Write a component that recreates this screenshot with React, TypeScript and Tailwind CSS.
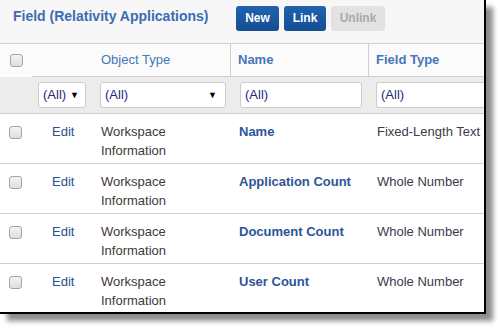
const rows = [
  { name: "Name", type: "Fixed-Length Text" },
  { name: "Application Count", type: "Whole Number" },
  { name: "Document Count", type: "Whole Number" },
  { name: "User Count", type: "Whole Number" },
];

const cols = "grid grid-cols-[32px_63px_136px_138px_1fr]";

function Checkbox() {
  return (
    <span className="block h-[13px] w-[13px] rounded-[3px] border border-[#a5a5a5] bg-gradient-to-b from-[#f4f4f4] to-[#dedede]" />
  );
}

function Caret() {
  return <span className="text-[9px] leading-none text-black">▼</span>;
}

export default function App() {
  return (
    <div className="h-[328px] w-[500px] overflow-hidden bg-white font-['Liberation_Sans',Arial,sans-serif] text-[13px]">
      <div className="h-[314px] w-[486px] overflow-hidden border-b-2 border-r-2 border-black bg-white shadow-[7px_7px_5px_rgba(0,0,0,0.45)]">
        {/* title bar */}
        <div className="flex h-[44px] items-center border-b border-[#cfcfcf] bg-[#f7f7f7] pl-[13px]">
          <h1 className="mb-[10px] w-[223px] text-[14px] font-bold text-[#3b6db4]">
            Field (Relativity Applications)
          </h1>
          <div className="mb-[7px] flex gap-[5px] text-[12px] font-bold">
            <button className="h-[25px] w-[43px] rounded-[3px] bg-gradient-to-b from-[#1f63ad] to-[#154e93] text-white">
              New
            </button>
            <button className="h-[25px] w-[42px] rounded-[3px] bg-gradient-to-b from-[#1f63ad] to-[#154e93] text-white">
              Link
            </button>
            <button className="h-[25px] w-[54px] rounded-[3px] bg-[#e2e2e2] text-[#a9a9a9]">
              Unlink
            </button>
          </div>
        </div>

        {/* header row */}
        <div className={`${cols} h-[33px] bg-[#fbfbfb]`}>
          <div className="flex items-center pl-[10px]">
            <Checkbox />
          </div>
          <div className="border-b border-[#cfcfcf]" />
          <div className="flex items-center border-b border-r border-[#cfcfcf] pl-[6px] text-[#4677b8]">
            Object Type
          </div>
          <div className="flex items-center border-b border-r border-[#cfcfcf] pl-[7px] font-bold text-[#4677b8]">
            Name
          </div>
          <div className="flex items-center border-b border-[#cfcfcf] pl-[7px] font-bold text-[#4677b8]">
            Field Type
          </div>
        </div>

        {/* filter row */}
        <div className={`${cols} h-[37px] items-center border-b border-[#cfcfcf] bg-[#ececec] text-[#1d2a7a]`}>
          <div />
          <div className="pl-[6px]">
            <div className="flex h-[26px] w-[48px] items-center justify-between rounded-[3px] border border-[#cccccc] bg-white pl-[4px] pr-[6px]">
              <span>(All)</span>
              <Caret />
            </div>
          </div>
          <div className="pl-[5px] pr-[5px]">
            <div className="flex h-[26px] items-center justify-between rounded-[3px] border border-[#cccccc] bg-white pl-[4px] pr-[8px]">
              <span>(All)</span>
              <Caret />
            </div>
          </div>
          <div className="pl-[9px] pr-[7px]">
            <div className="flex h-[26px] items-center rounded-[3px] border border-[#cccccc] bg-white pl-[4px]">
              (All)
            </div>
          </div>
          <div className="pl-[7px]">
            <div className="flex h-[26px] w-[120px] items-center rounded-l-[3px] border-y border-l border-[#cccccc] bg-white pl-[4px]">
              (All)
            </div>
          </div>
        </div>

        {/* data rows */}
        {rows.map((row, i) => (
          <div
            key={row.name}
            className={`${cols} h-[50px] leading-[19px] ${i < rows.length - 1 ? "border-b border-[#cfcfcf]" : ""}`}
          >
            <div className="pl-[9px] pt-[12px]">
              <Checkbox />
            </div>
            <div className="pl-[20px] pt-[8px] text-[#2b4f8e]">Edit</div>
            <div className="pl-[6px] pt-[8px] text-[#403a38]">
              Workspace
              <br />
              Information
            </div>
            <div className="pl-[8px] pt-[8px] font-bold text-[#2c5597]">{row.name}</div>
            <div className="whitespace-nowrap pl-[8px] pt-[8px] text-[#403a48]">{row.type}</div>
          </div>
        ))}
      </div>
    </div>
  );
}
